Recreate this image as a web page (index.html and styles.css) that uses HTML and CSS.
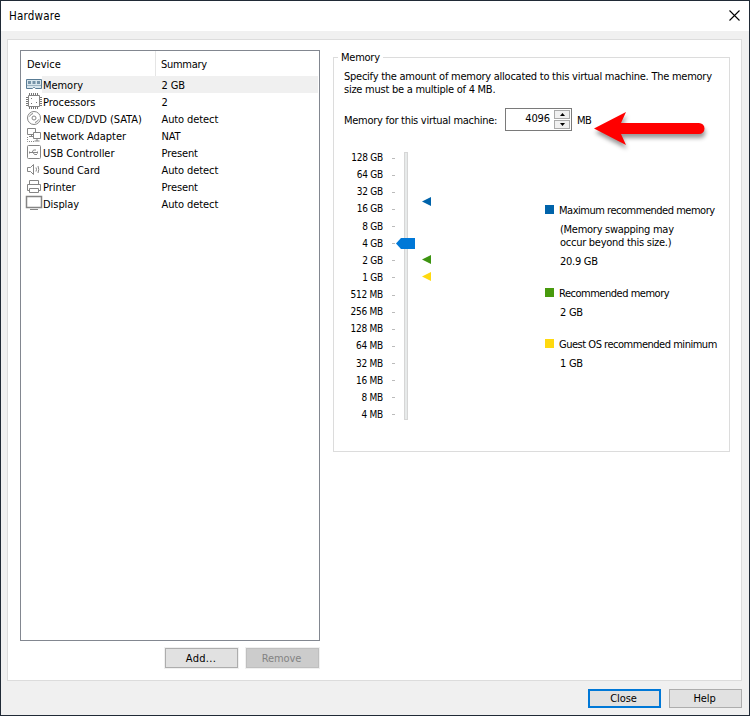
FILE: index.html
```html
<!DOCTYPE html>
<html lang="en">
<head>
<meta charset="utf-8">
<title>Hardware</title>
<link rel="stylesheet" href="styles.css">
</head>
<body>
<div class="window">
  <header class="titlebar">
    <span class="title">Hardware</span>
    <svg class="close-icon" width="11" height="11" viewBox="0 0 11 11"><path d="M.5.5l10 10M10.5.5l-10 10"/></svg>
  </header>
  <main class="panel">
    <section class="devices">
      <div class="list">
        <div class="list-head"><span class="col-device">Device</span><span class="col-summary">Summary</span></div>
        <div class="row selected">
          <svg class="icon" viewBox="0 0 18 17"><path class="mem" d="M1.500 3.500h15v9h-6l-1-1h-1l-1 1h-6z"/><path class="chips" d="M3 5h3v3H3zM7.500 5h3v3h-3zM12 5h3v3h-3z"/><path class="memline" d="M2 9.500h14"/></svg>
          <span class="name">Memory</span><span class="value">2 GB</span></div>
        <div class="row">
          <svg class="icon" viewBox="0 0 18 17"><path d="M3.500 2.500h11v11h-11z"/><path class="pins" d="M4.500 0v2M6.500 0v2M8.500 0v2M10.500 0v2M12.500 0v2M4.500 14v2M6.500 14v2M8.500 14v2M10.500 14v2M12.500 14v2M1 4.500h2M1 6.500h2M1 8.500h2M1 10.500h2M1 12.500h2M15 4.500h2M15 6.500h2M15 8.500h2M15 10.500h2M15 12.500h2M6 5.500h1M11 9.500h1M6 10.500h1"/></svg>
          <span class="name">Processors</span><span class="value">2</span></div>
        <div class="row">
          <svg class="icon" viewBox="0 0 18 17"><circle cx="9" cy="8" r="6.500"/><circle cx="9" cy="8" r="2"/><path d="M4.500 6.500q1-2.500 3.500-3M13.500 9.500q-1 2.500-3.500 3"/></svg>
          <span class="name">New CD/DVD (SATA)</span><span class="value">Auto detect</span></div>
        <div class="row">
          <svg class="icon" viewBox="0 0 18 17"><path d="M2.500 1.500h8v6h-8zM6.500 8v1M4 9.500h4"/><path class="cover" d="M8.500 5.500h7v6h-7z"/><path d="M12 12v2M9.500 14h5"/><path class="dotted" d="M2.500 10v4.500H9"/></svg>
          <span class="name">Network Adapter</span><span class="value">NAT</span></div>
        <div class="row">
          <svg class="icon" viewBox="0 0 18 17"><rect x="2.500" y="1.500" width="13" height="13" rx="1"/><path d="M5 8.500h8M7 8.500l1.500-2.500H11M8 8.500l1.500 2H12M4.500 8.500h2M4.500 7.500v2M12.500 7.500v2"/></svg>
          <span class="name">USB Controller</span><span class="value">Present</span></div>
        <div class="row">
          <svg class="icon" viewBox="0 0 18 17"><path d="M2.500 6.500h3l3-3v10l-3-3h-3zM11 6.500q1 2 0 4M13 5q1.500 3.500 0 7"/></svg>
          <span class="name">Sound Card</span><span class="value">Auto detect</span></div>
        <div class="row">
          <svg class="icon" viewBox="0 0 18 17"><path d="M4.500 6.500v-4h9v4M4.500 12.500h-2v-6h13v6h-2M4.500 10.500h9v4h-9z"/></svg>
          <span class="name">Printer</span><span class="value">Present</span></div>
        <div class="row">
          <svg class="icon" viewBox="0 0 18 17"><path class="screen" d="M1.500 1.500h15v11h-15z"/><path d="M5 14.500h8"/></svg>
          <span class="name">Display</span><span class="value">Auto detect</span></div>
      </div>
      <div class="list-actions"><button class="btn add">Add...</button><button class="btn remove" disabled>Remove</button></div>
    </section>
    <fieldset class="memory">
      <legend>Memory</legend>
      <p class="intro">Specify the amount of memory allocated to this virtual machine. The memory<br>size must be a multiple of 4 MB.</p>
      <div class="amount">
        <label class="amount-label">Memory for this virtual machine:</label>
        <div class="spinner">
          <span class="spin-value">4096</span>
          <div class="spin-buttons">
            <span class="spin"><svg width="5" height="3"><path d="M0 3L2.500 0L5 3z"/></svg></span>
            <span class="spin"><svg width="5" height="3"><path d="M0 0L2.500 3L5 0z"/></svg></span>
          </div>
        </div>
        <span class="unit">MB</span>
        <svg class="arrow" width="120" height="48" viewBox="0 0 120 48"><path d="M4 21.500L36 5l-5 11h78a5.500 5.500 0 0 1 0 11H31l5 11z"/></svg>
      </div>
      <div class="chart">
        <ol class="scale">
          <li>128 GB</li><li>64 GB</li><li>32 GB</li><li>16 GB</li><li>8 GB</li><li>4 GB</li><li>2 GB</li><li>1 GB</li>
          <li>512 MB</li><li>256 MB</li><li>128 MB</li><li>64 MB</li><li>32 MB</li><li>16 MB</li><li>8 MB</li><li>4 MB</li>
        </ol>
        <div class="track">
          <svg class="thumb" width="19" height="11"><path d="M0 5.500L5 0h14v11H5z"/></svg>
          <svg class="marker at-max" width="9" height="9"><path d="M0 4.500L9 0v9z"/></svg>
          <svg class="marker at-rec" width="9" height="9"><path d="M0 4.500L9 0v9z"/></svg>
          <svg class="marker at-min" width="9" height="9"><path d="M0 4.500L9 0v9z"/></svg>
        </div>
        <dl class="key">
          <dt><i class="swatch blue"></i><span>Maximum recommended memory</span></dt>
          <dd class="note">(Memory swapping may<br>occur beyond this size.)</dd>
          <dd class="max">20.9 GB</dd>
          <dt><i class="swatch green"></i><span>Recommended memory</span></dt>
          <dd class="rec">2 GB</dd>
          <dt><i class="swatch yellow"></i><span>Guest OS recommended minimum</span></dt>
          <dd>1 GB</dd>
        </dl>
      </div>
    </fieldset>
  </main>
  <footer class="footer"><button class="btn primary">Close</button><button class="btn">Help</button></footer>
</div>
</body>
</html>
```
FILE: styles.css
```css
* { box-sizing: border-box; }
body { margin: 0; font: 11px/17px "DejaVu Sans Condensed", "Liberation Sans", sans-serif; color: #000; overflow: hidden; }
svg { display: block; flex: none; }
.window { width: 750px; height: 716px; background: #f0f0f0; border: 1px solid #202a36; }
.titlebar { height: 30px; background: #fff; display: flex; justify-content: space-between; align-items: center; padding: 0 9px 0 8px; }
.title { font-size: 11.5px; letter-spacing: .2px; }
.close-icon { stroke: #000; stroke-width: 1.1; margin-top: -1px; }
.panel { margin: 8px 7px 0 6px; height: 642px; background: #fff; border: 1px solid #dcdcdc; display: flex; padding: 10px 10px 0 12px; }
.devices { width: 300px; margin-right: 13px; flex: none; }
.list { height: 591px; border: 1px solid #828790; }
.list-head { height: 25px; display: flex; line-height: 28px; }
.col-device { width: 135px; padding-left: 6px; border-right: 1px solid #e5e5e5; }
.col-summary { padding-left: 5px; letter-spacing: -.3px; }
.row { display: flex; height: 17px; line-height: 19px; margin-right: 1px; padding-left: 4px; }
.row.selected { background: linear-gradient(to right, #fff 21px, #f0f0f0 21px); }
.icon { width: 18px; height: 17px; fill: none; stroke: #858585; stroke-width: 1; }
.icon .mem { stroke: #587b94; fill: #d9e6ed; }
.icon .chips { fill: #7593a8; stroke: none; }
.icon .memline { stroke: #9cb3c2; }
.icon .pins { stroke: #777; }
.icon .cover { fill: #fff; }
.icon .dotted { stroke-dasharray: 1 1; }
.icon .screen { stroke-width: 1.5; }
.name { width: 118.5px; white-space: nowrap; letter-spacing: -.05px; }
.value { letter-spacing: -.1px; }
.btn { width: 73px; height: 20px; margin: 0; padding: 0; background: #e1e1e1; border: 1px solid #adadad; font: inherit; line-height: 17px; color: #000; }
.btn:disabled { background: #ccc; border-color: #bfbfbf; color: #838383; }
.list-actions { display: flex; gap: 8px; justify-content: flex-end; margin: 7px 1px 0 0; }
.list-actions .btn { box-shadow: 0 0 0 1px #f0f0f0; }
.btn.add { letter-spacing: .3px; padding-right: 1px; }
.btn.remove { padding-right: 2px; letter-spacing: -.1px; }
.memory { position: relative; width: 397px; height: 402px; margin: 0; padding: 0 10px; border: 1px solid #dcdcdc; min-width: 0; }
.memory legend { margin-left: -6px; padding: 0 3px; height: 14px; line-height: 15px; letter-spacing: -.25px; }
.intro { margin: 6px 0 0; line-height: 13px; white-space: nowrap; letter-spacing: -.25px; }
.amount { display: flex; align-items: center; height: 23px; margin-top: 12px; }
.amount-label { width: 161px; white-space: nowrap; letter-spacing: -.28px; padding-top: 1px; }
.spinner { width: 67px; height: 23px; border: 1px solid #7a7a7a; display: flex; justify-content: flex-end; }
.spin-value { line-height: 20px; margin-right: 4px; letter-spacing: -.1px; }
.spin-buttons { width: 17px; padding: 1px 1px 0 0; display: grid; gap: 1px; grid-template-rows: 9px 9px; }
.spin { border: 1px solid #aaa; background: #f0f0f0; display: flex; align-items: center; justify-content: center; }
.unit { margin-left: 5px; letter-spacing: -.5px; padding-top: 1px; }
.arrow { position: absolute; left: 256px; top: 43px; filter: drop-shadow(1px 4px 2px #0006); fill: #f00; }
.chart { display: flex; margin-top: 18px; }
.scale { flex: none; list-style: none; margin: 0; padding: 0; width: 51px; font-size: 10px; text-align: right; letter-spacing: -.25px; }
.scale li { height: 17.13px; line-height: 17px; white-space: nowrap; padding-right: 12px; background: linear-gradient(#bbb,#bbb) right 8.500px / 3px 1px no-repeat; }
.track { flex: none; position: relative; width: 4px; height: 268px; margin: 3px 0 0 9px; background: #e7eaea; border: 1px solid #d6d6d6; }
.thumb { position: absolute; left: -9px; top: 85px; fill: #0078d7; }
.marker { position: absolute; left: 17px; }
.at-max { top: 44px; fill: #0063aa; }
.at-rec { top: 102px; fill: #3d9411; }
.at-min { top: 119px; fill: #ffd90f; }
.key { margin: 54px 0 0 137px; white-space: nowrap; line-height: 13px; letter-spacing: -.48px; }
.key dt { display: flex; align-items: center; height: 13px; }
.key dt span { padding-top: 2px; }
.key dd { margin: 6px 0 0 15px; letter-spacing: -.27px; }
.key .note { margin-top: 7px; }
.key .max { margin-bottom: 18px; }
.key .rec { margin: 7px 0 18px 15px; }
.key dd:last-child { margin-top: 7px; }
.swatch { width: 9px; height: 9px; margin-right: 5px; flex: none; }
.blue { background: #0063aa; }
.green { background: #489a0d; }
.yellow { background: #ffd90f; }
.footer { display: flex; justify-content: flex-end; gap: 8px; padding: 8px 7px 0 0; }
.footer .btn { height: 19px; line-height: 17px; letter-spacing: -.1px; padding-right: 2px; }
.footer .primary { border: 2px solid #0078d7; line-height: 15px; }
```
